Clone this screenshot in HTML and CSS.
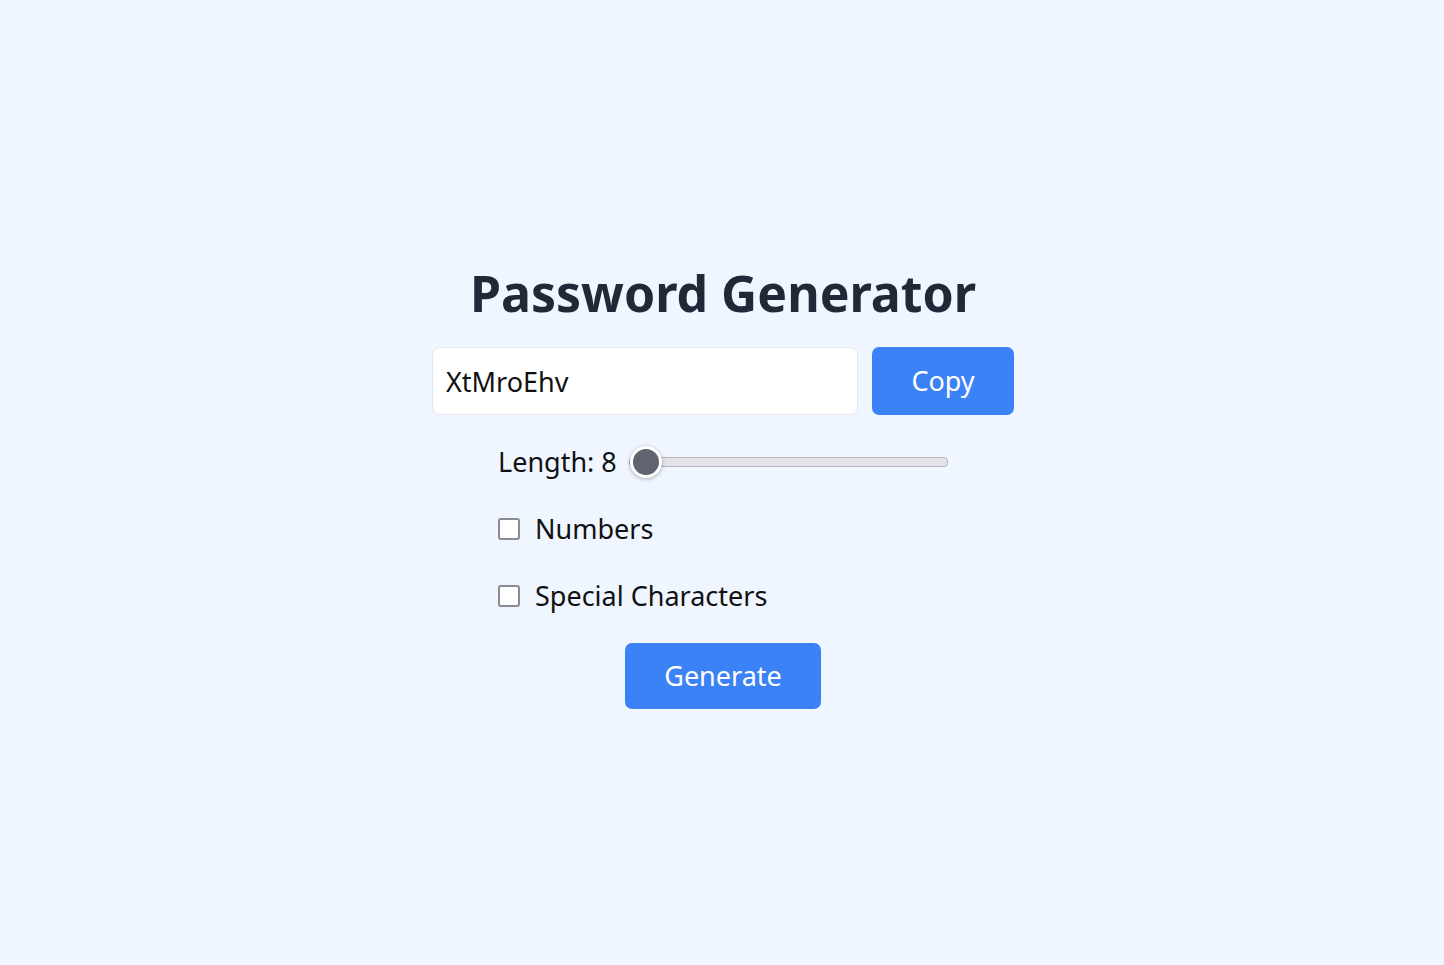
FILE: index.html
```html
<!DOCTYPE html>
<html lang="en">
<head>
    <meta charset="UTF-8">
    <meta name="viewport" content="width=device-width, initial-scale=1.0">
    <title>Password Generator</title>
    <link rel="stylesheet" href="styles.css">
</head>
<body>
    <div class="generator">
        <h1>Password Generator</h1>

        <div class="output-row">
            <input type="text" id="password" class="password-field" value="XtMroEhv" readonly>
            <button class="btn copy-btn" onclick="copyPassword()">Copy</button>
        </div>

        <div class="options">
            <div class="option-row">
                <label for="length">Length: <span id="lengthValue">8</span></label>
                <input type="range" id="length" class="length-slider" min="8" max="32" value="8" oninput="updateLength()">
            </div>
            <div class="option-row">
                <input type="checkbox" id="numbers" class="check">
                <label for="numbers">Numbers</label>
            </div>
            <div class="option-row">
                <input type="checkbox" id="special" class="check">
                <label for="special">Special Characters</label>
            </div>
        </div>

        <button class="btn generate-btn" onclick="generatePassword()">Generate</button>
    </div>

    <script>
        function updateLength() {
            document.getElementById('lengthValue').textContent = document.getElementById('length').value;
        }

        function generatePassword() {
            let chars = 'ABCDEFGHIJKLMNOPQRSTUVWXYZabcdefghijklmnopqrstuvwxyz';
            if (document.getElementById('numbers').checked) chars += '0123456789';
            if (document.getElementById('special').checked) chars += '!@#$%^&*()_+-=[]{}';

            const length = parseInt(document.getElementById('length').value);
            let result = '';
            for (let i = 0; i < length; i++) {
                result += chars.charAt(Math.floor(Math.random() * chars.length));
            }
            document.getElementById('password').value = result;
        }

        function copyPassword() {
            const field = document.getElementById('password');
            field.select();
            navigator.clipboard && navigator.clipboard.writeText(field.value);
        }
    </script>
</body>
</html>
```

FILE: styles.css
```css
body {
    margin: 0;
    min-height: 100vh;
    background: #eff6ff;
    font-family: "Noto Sans", sans-serif;
    color: #111111;
    display: flex;
    align-items: center;
    justify-content: center;
}
.generator {
    display: flex;
    flex-direction: column;
    align-items: center;
    margin: 6px 0 0 2px;
}
h1 {
    margin: 0 0 24px;
    font-size: 50px;
    line-height: 60px;
    font-weight: 700;
    color: #1f2937;
}
.output-row {
    display: flex;
    gap: 14px;
}
.password-field {
    width: 426px;
    height: 68px;
    box-sizing: border-box;
    padding: 2px 13px 0;
    font-family: inherit;
    font-size: 27px;
    color: #111111;
    background: #ffffff;
    border: 1px solid #e5e7eb;
    border-radius: 8px;
    outline: none;
}
.btn {
    font-family: inherit;
    font-size: 27px;
    color: #ffffff;
    background: #3b82f6;
    border: none;
    border-radius: 7px;
    cursor: pointer;
}
.btn:hover {
    background: #2563eb;
}
.copy-btn {
    width: 142px;
    height: 68px;
}
.options {
    width: 450px;
    margin-top: 30px;
    display: flex;
    flex-direction: column;
    gap: 33px;
}
.option-row {
    height: 34px;
    display: flex;
    align-items: center;
    font-size: 27px;
}
.length-slider {
    -webkit-appearance: none;
    appearance: none;
    flex: 1;
    height: 8px;
    margin: 0 0 0 12px;
    background: #e4e3e9;
    border: 1px solid #b5b4bc;
    border-radius: 4px;
    outline: none;
}
.length-slider::-webkit-slider-thumb {
    -webkit-appearance: none;
    width: 32px;
    height: 32px;
    border-radius: 50%;
    background: #61636e;
    border: 3px solid #ffffff;
    box-shadow: 0 1px 4px rgba(0, 0, 0, 0.3);
    cursor: pointer;
}
.check {
    -webkit-appearance: none;
    appearance: none;
    width: 22px;
    height: 22px;
    margin: 0 15px 0 0;
    background: #ffffff;
    border: 2px solid #8a8a93;
    border-radius: 3px;
    cursor: pointer;
}
.check:checked {
    background: #3b82f6;
    border-color: #3b82f6;
}
.generate-btn {
    width: 196px;
    height: 66px;
    margin-top: 30px;
}
```
